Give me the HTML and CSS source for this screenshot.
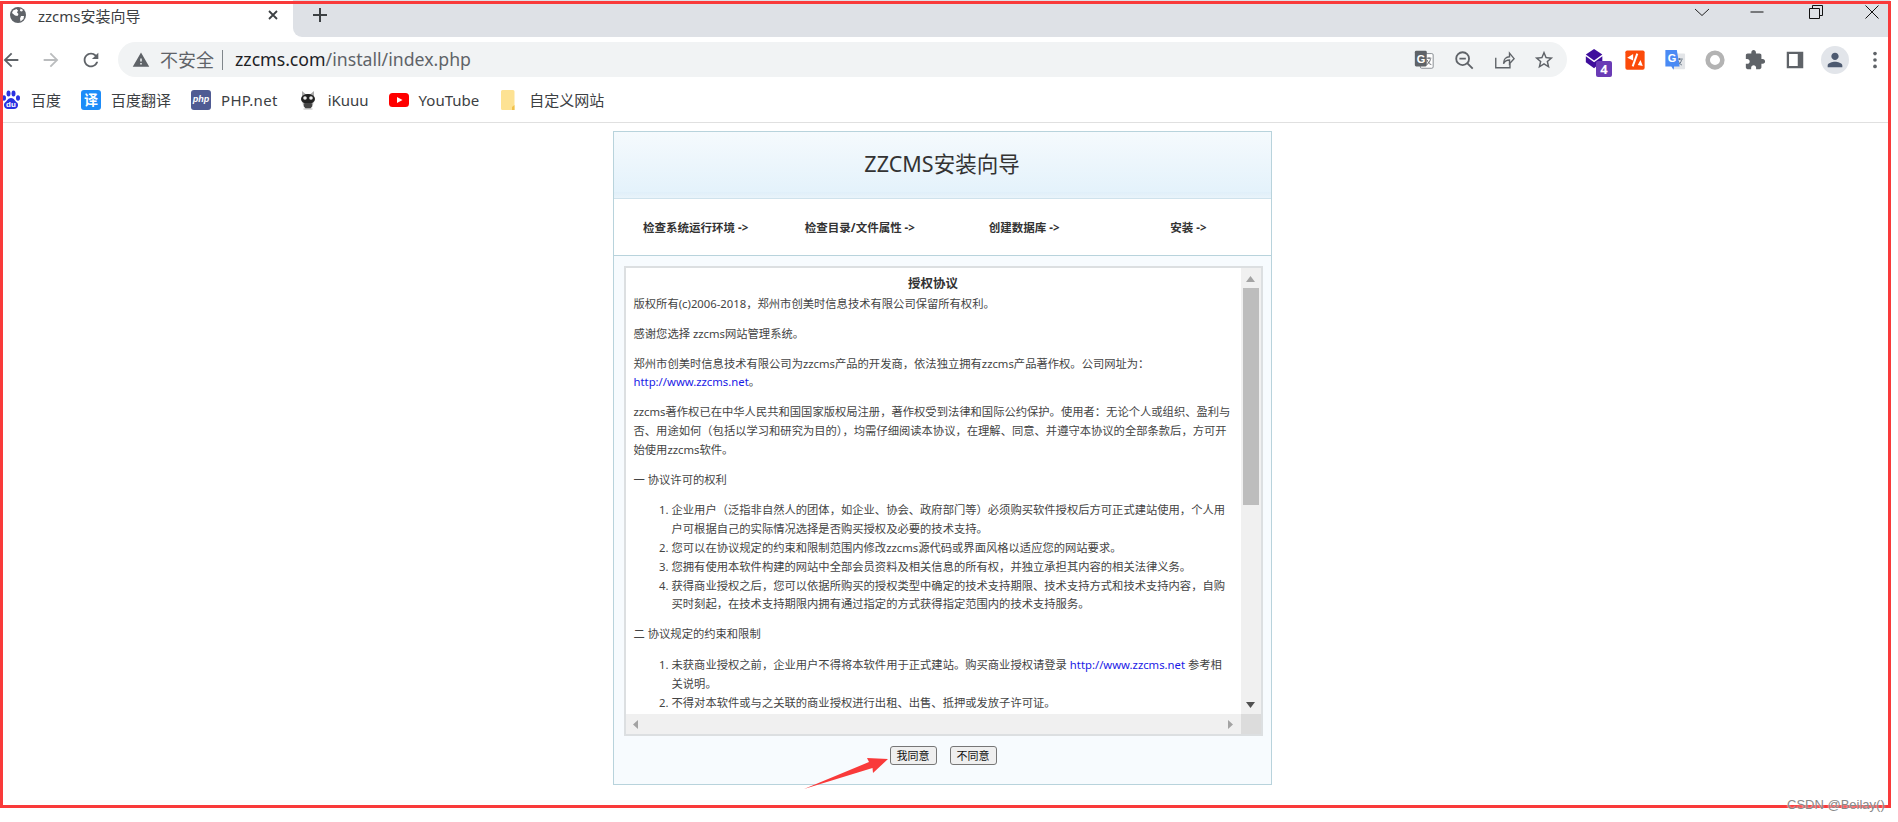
FILE: index.html
```html
<!DOCTYPE html>
<html>
<head>
    <meta charset="UTF-8">
    <title>zzcms安装向导</title>
    <link rel="stylesheet" href="styles.css">
</head>
<body>
    <div class="browser">
        <!-- 标签栏 -->
        <div class="tabstrip">
            <div class="tab">
                <svg class="tab-favicon" viewBox="0 0 16 16"><circle cx="8" cy="8" r="8" fill="#5f6368"/><path d="M3 3.500 6.500 2 8 3.500 7 5.500 8.500 7 7.500 9 5 8.500 2 6zM11 9h3l-.5 3-3 2.500-.5-3zM10.500 1.500 13 3l-1 1.500-2-.5z" fill="#fff"/></svg>
                <span class="tab-title">zzcms安装向导</span>
                <svg class="tab-close" viewBox="0 0 12 12"><path d="M2 2l8 8M10 2l-8 8" stroke="#3c4043" stroke-width="1.800" fill="none"/></svg>
            </div>
            <div class="tab-rest">
                <svg class="tab-plus" viewBox="0 0 16 16"><path d="M8 1v14M1 8h14" stroke="#3c4043" stroke-width="2" fill="none"/></svg>
                <div class="window-controls">
                    <svg class="win-icon" viewBox="0 0 16 16"><path d="M1 5l7 6.500L15 5" stroke="#222" fill="none"/></svg>
                    <svg class="win-icon win-min" viewBox="0 0 16 16"><path d="M1.500 8h13" stroke="#111" stroke-width="1" fill="none"/></svg>
                    <svg class="win-icon win-restore" viewBox="0 0 16 16"><path d="M1.500 4.500h10v10h-10zM4.500 4.500v-3h10v10h-3" stroke="#111" fill="none"/></svg>
                    <svg class="win-icon win-close" viewBox="0 0 16 16"><path d="M1.500 1.500l13 13M14.500 1.500l-13 13" stroke="#111" fill="none"/></svg>
                </div>
            </div>
        </div>

        <!-- 地址栏 -->
        <div class="toolbar">
            <button class="tool-btn"><svg class="icon" viewBox="0 0 24 24"><path fill="#5f6368" d="M20 11H7.830l5.590-5.590L12 4l-8 8 8 8 1.410-1.410L7.830 13H20v-2z"/></svg></button>
            <button class="tool-btn"><svg class="icon" viewBox="0 0 24 24"><path fill="#babcbe" d="M12 4l-1.410 1.410L16.170 11H4v2h12.170l-5.580 5.590L12 20l8-8z"/></svg></button>
            <button class="tool-btn"><svg class="icon" viewBox="0 0 24 24"><path fill="#5f6368" d="M17.650 6.350A7.958 7.958 0 0 0 12 4c-4.420 0-7.990 3.580-7.990 8s3.570 8 7.990 8c3.730 0 6.840-2.550 7.730-6h-2.080A5.990 5.990 0 0 1 12 18c-3.310 0-6-2.690-6-6s2.690-6 6-6c1.660 0 3.140.690 4.220 1.780L13 11h7V4l-2.350 2.350z"/></svg></button>
            <div class="omnibox">
                <svg class="warn-icon" viewBox="0 0 24 24"><path fill="#5f6368" d="M1 21h22L12 2 1 21zm12-3h-2v-2h2v2zm0-4h-2v-4h2v4z"/></svg>
                <span class="not-secure">不安全</span>
                <span class="omni-sep"></span>
                <span class="url"><span class="url-host">zzcms.com</span>/install/index.php</span>
                <div class="omni-actions">
                    <button class="tool-btn">
                        <svg class="icon" viewBox="0 0 24 24"><rect x="8" y="5" width="14" height="16" rx="1.500" fill="#fff" stroke="#80868b"/><rect x="2" y="2" width="13" height="17" rx="1.500" fill="#5f6368"/><text x="4" y="15" class="svg-g">G</text><path d="M15 10h5M17.500 9v2M19 11c-.500 3-2 5-4 6M15.500 12c.800 2.500 2 4.500 4.500 5" stroke="#5f6368" fill="none"/></svg>
                    </button>
                    <button class="tool-btn"><svg class="icon" viewBox="0 0 24 24"><circle cx="10.500" cy="10.500" r="7" fill="none" stroke="#5f6368" stroke-width="2"/><path d="M7 10.500h7M15.500 15.500l6 6" stroke="#5f6368" stroke-width="2" fill="none"/></svg></button>
                    <button class="tool-btn"><svg class="icon" viewBox="0 0 24 24"><path d="M3 9.500v11h15.500v-5M11.500 16c0-5 3-7.500 6.500-7.500V4.500l5 6-5 5.500v-4c-3 0-5 1-6.500 4z" fill="none" stroke="#5f6368" stroke-width="1.500"/></svg></button>
                    <button class="tool-btn"><svg class="icon" viewBox="0 0 24 24"><path fill="#5f6368" d="M22 9.240l-7.190-.620L12 2 9.190 8.630 2 9.240l5.460 4.730L5.820 21 12 17.270 18.180 21l-1.630-7.030L22 9.240zM12 15.400l-3.760 2.270 1-4.280-3.320-2.880 4.380-.380L12 6.100l1.710 4.040 4.380.380-3.320 2.880 1 4.280L12 15.400z"/></svg></button>
                </div>
            </div>
            <div class="ext-icons">
                <button class="tool-btn">
                    <svg class="icon" viewBox="0 0 24 24"><path fill="#3f0e9c" d="M11 0l9 6-9 6.500L2 6z"/><path fill="#3f0e9c" d="M2 8l9 6.500 9-6.500v5l-9 8-9-6.500z"/></svg>
                    <span class="ext-badge">4</span>
                </button>
                <button class="tool-btn"><svg class="icon" viewBox="0 0 24 24"><rect x="1.500" y="1.500" width="21" height="21" rx="2" fill="#fb4a0a"/><path d="M10 5.500v7L3.500 9.500zM15 17.500l5.500 1-2.500-6.500z" fill="#fff"/><path d="M14.500 5L9.500 19" stroke="#fff" stroke-width="2.200" fill="none"/></svg></button>
                <button class="tool-btn">
                    <svg class="icon" viewBox="0 0 24 24"><rect x="9" y="5" width="14" height="17" rx="1" fill="#e3e5e8"/><path d="M14 11h6.500M17 10v2M19 12c-.500 3-2 4.500-4 5.500M15.500 13c.800 2 2 3.500 4 4.500" stroke="#5f6f7f" fill="none"/><path fill="#4a8af4" d="M1.500 1h12.500l3 18H11l-.500 3.500-2.500-3.500H1.500z"/><text x="4" y="14" class="svg-g">G</text></svg>
                </button>
                <button class="tool-btn"><svg class="icon" viewBox="0 0 24 24"><circle cx="12" cy="12" r="8" fill="none" stroke="#b3b3b3" stroke-width="5"/></svg></button>
                <button class="tool-btn"><svg class="icon" viewBox="0 0 24 24"><path fill="#5f6368" d="M20.500 11H19V7c0-1.100-.900-2-2-2h-4V3.500C13 2.120 11.880 1 10.500 1S8 2.120 8 3.500V5H4c-1.100 0-1.990.900-1.990 2v3.800H3.500c1.490 0 2.700 1.210 2.700 2.700s-1.210 2.700-2.700 2.700H2V20c0 1.100.900 2 2 2h3.800v-1.500c0-1.490 1.210-2.700 2.700-2.700 1.490 0 2.700 1.210 2.700 2.700V22H17c1.100 0 2-.900 2-2v-4h1.500c1.380 0 2.500-1.120 2.500-2.500S21.880 11 20.500 11z"/></svg></button>
                <button class="tool-btn"><svg class="icon" viewBox="0 0 24 24"><path fill="#5f6368" fill-rule="evenodd" d="M3 3h18v18H3zM5.500 5.500v13H15v-13z"/></svg></button>
                <button class="tool-btn">
                    <span class="avatar"><svg class="avatar-icon" viewBox="0 0 24 24"><path fill="#4d5a70" d="M12 12c2.210 0 4-1.790 4-4s-1.790-4-4-4-4 1.790-4 4 1.790 4 4 4zm0 2c-2.670 0-8 1.340-8 4v2h16v-2c0-2.660-5.330-4-8-4z"/></svg></span>
                </button>
                <button class="tool-btn"><svg class="icon" viewBox="0 0 24 24"><circle cx="12" cy="5" r="2" fill="#5f6368"/><circle cx="12" cy="12" r="2" fill="#5f6368"/><circle cx="12" cy="19" r="2" fill="#5f6368"/></svg></button>
            </div>
        </div>

        <!-- 书签栏 -->
        <div class="bookmarks">
            <a class="bookmark">
                <svg class="bm-icon" viewBox="0 0 20 20"><g fill="#2932e1"><ellipse cx="3" cy="8" rx="2" ry="2.800"/><ellipse cx="7.500" cy="3.500" rx="2" ry="3"/><ellipse cx="12.500" cy="3.500" rx="2" ry="3"/><ellipse cx="17" cy="8" rx="2" ry="2.800"/><path d="M10 8c3 0 4 3 6 4.500 2 2 1 6.500-3 6.500H7c-4 0-5-4.500-3-6.500C6 11 7 8 10 8z"/></g><text x="10" y="17" class="svg-du">du</text></svg>
                <span>百度</span>
            </a>
            <a class="bookmark">
                <span class="bm-tile bm-tile-yi">译</span>
                <span>百度翻译</span>
            </a>
            <a class="bookmark">
                <span class="bm-tile bm-tile-php">php</span>
                <span class="bm-latin">PHP.net</span>
            </a>
            <a class="bookmark">
                <svg class="bm-icon" viewBox="0 0 20 20"><path fill="#aaa" d="M4 1l3.500 3h5L16 1v8l-1 6H5L4 9z"/><ellipse cx="10" cy="9" rx="7" ry="5" fill="#222"/><circle cx="7" cy="8" r="1.800" fill="#eee"/><circle cx="13" cy="8" r="1.800" fill="#eee"/><path d="M6.500 13h7l1 3-2 2.500h-5l-2-2.500z" fill="#444"/><path d="M5.500 19h9" stroke="#bbb"/></svg>
                <span>iKuuu</span>
            </a>
            <a class="bookmark">
                <svg class="bm-icon" viewBox="0 0 20 20"><rect y="3" width="20" height="14" rx="3.500" fill="#f00"/><path d="M8 7l5.500 3L8 13z" fill="#fff"/></svg>
                <span>YouTube</span>
            </a>
            <a class="bookmark">
                <svg class="bm-icon" viewBox="0 0 20 20"><path d="M3.500 0H14a1.500 1.500 0 0 1 1.500 1.500V20h-12A1.500 1.500 0 0 1 2 18.500V1.500A1.500 1.500 0 0 1 3.500 0z" fill="#fde293"/><path d="M13 20v-3l2.500-2v5z" fill="#f0c14b"/></svg>
                <span>自定义网站</span>
            </a>
        </div>

        <!-- 页面内容 -->
        <div class="page">
            <div class="panel">
                <div class="panel-header">
                    <h1 class="panel-title">ZZCMS安装向导</h1>
                </div>
                <ul class="steps">
                    <li>检查系统运行环境 -&gt;</li>
                    <li>检查目录/文件属性 -&gt;</li>
                    <li>创建数据库 -&gt;</li>
                    <li>安装 -&gt;</li>
                </ul>
                <div class="panel-body">
                    <div class="license">
                        <div class="license-main">
                            <div class="license-view">
                                <h2 class="license-title">授权协议</h2>
                                <p>版权所有(c)2006-2018，郑州市创美时信息技术有限公司保留所有权利。</p>
                                <p>感谢您选择 zzcms网站管理系统。</p>
                                <p>郑州市创美时信息技术有限公司为zzcms产品的开发商，依法独立拥有zzcms产品著作权。公司网址为：<br><a href="#">http://www.zzcms.net</a>。</p>
                                <p>zzcms著作权已在中华人民共和国国家版权局注册，著作权受到法律和国际公约保护。使用者：无论个人或组织、盈利与否、用途如何（包括以学习和研究为目的），均需仔细阅读本协议，在理解、同意、并遵守本协议的全部条款后，方可开始使用zzcms软件。</p>
                                <p>一 协议许可的权利</p>
                                <ol>
                                    <li>企业用户（泛指非自然人的团体，如企业、协会、政府部门等）必须购买软件授权后方可正式建站使用，个人用户可根据自己的实际情况选择是否购买授权及必要的技术支持。</li>
                                    <li>您可以在协议规定的约束和限制范围内修改zzcms源代码或界面风格以适应您的网站要求。</li>
                                    <li>您拥有使用本软件构建的网站中全部会员资料及相关信息的所有权，并独立承担其内容的相关法律义务。</li>
                                    <li>获得商业授权之后，您可以依据所购买的授权类型中确定的技术支持期限、技术支持方式和技术支持内容，自购买时刻起，在技术支持期限内拥有通过指定的方式获得指定范围内的技术支持服务。</li>
                                </ol>
                                <p>二 协议规定的约束和限制</p>
                                <ol>
                                    <li>未获商业授权之前，企业用户不得将本软件用于正式建站。购买商业授权请登录 <a href="#">http://www.zzcms.net</a> 参考相关说明。</li>
                                    <li>不得对本软件或与之关联的商业授权进行出租、出售、抵押或发放子许可证。</li>
                                </ol>
                            </div>
                            <div class="vscroll">
                                <div class="sb-btn"><svg class="sb-arrow" viewBox="0 0 9 9"><path d="M4.500 2L9 8H0z" fill="#a3a3a3"/></svg></div>
                                <div class="sb-track"><div class="sb-thumb"></div></div>
                                <div class="sb-btn"><svg class="sb-arrow" viewBox="0 0 9 9"><path d="M4.500 8L9 2H0z" fill="#505050"/></svg></div>
                            </div>
                        </div>
                        <div class="license-foot">
                            <div class="hscroll">
                                <div class="sb-btn"><svg class="sb-arrow" viewBox="0 0 9 9"><path d="M2 4.500L7 0V9z" fill="#a3a3a3"/></svg></div>
                                <div class="sb-btn"><svg class="sb-arrow" viewBox="0 0 9 9"><path d="M7 4.500L2 0V9z" fill="#a3a3a3"/></svg></div>
                            </div>
                            <div class="sb-corner"></div>
                        </div>
                    </div>
                    <div class="panel-actions">
                        <button class="action-btn">我同意</button>
                        <button class="action-btn">不同意</button>
                    </div>
                </div>
            </div>
        </div>
    </div>

    <!-- 截图上的标注 -->
    <div class="frame"></div>
    <svg class="note-arrow" viewBox="0 0 90 36"><path fill="#f93a3a" d="M0 34L65 7 63 3 84 4 69 18 68.500 13z"/></svg>
    <div class="watermark">CSDN @Beilay()</div>
</body>
</html>
```

FILE: styles.css
```css
* {
    box-sizing: border-box;
}
html, body {
    height: 100%;
}
body {
    margin: 0;
    background: white;
    overflow: hidden;
    font-family: "Noto Sans", "Noto Sans CJK SC", sans-serif;
}
button {
    font-family: inherit;
}
.browser {
    width: 1890px;
    height: 806px;
    overflow: hidden;
}

/* tab strip */
.tabstrip {
    display: flex;
    height: 37px;
    background: white;
}
.tab {
    width: 293px;
    display: flex;
    align-items: center;
    padding: 0 0 7px 10px;
    background: white;
}
.tab-favicon {
    width: 16px;
    height: 16px;
}
.tab-title {
    margin-left: 12px;
    font-size: 15px;
    color: #3c4043;
}
.tab-close {
    width: 12px;
    height: 12px;
    margin-left: auto;
    margin-right: 14px;
}
.tab-rest {
    flex: 1;
    display: flex;
    align-items: flex-start;
    background: #dee1e6;
    border-bottom-left-radius: 9px;
}
.tab-plus {
    width: 16px;
    height: 16px;
    margin: 7px 0 0 19px;
}
.window-controls {
    display: flex;
    margin-left: auto;
    padding: 4px 10px 0 0;
}
.win-icon {
    width: 16px;
    height: 16px;
}
.win-min {
    margin-left: 39px;
}
.win-restore {
    margin-left: 43px;
}
.win-close {
    margin-left: 40px;
}

/* toolbar */
.toolbar {
    display: flex;
    align-items: center;
    width: 1899px;
    height: 45px;
    margin-left: -9px;
    background: white;
}
.tool-btn {
    position: relative;
    flex: none;
    display: flex;
    align-items: center;
    justify-content: center;
    width: 40px;
    height: 35px;
    padding: 0;
    border: none;
    background: none;
}
.icon {
    width: 22px;
    height: 22px;
}
.omnibox {
    flex: none;
    display: flex;
    align-items: center;
    width: 1449px;
    height: 35px;
    margin-left: 7px;
    padding: 0 3px 0 14px;
    border-radius: 18px;
    background: #f1f3f4;
}
.warn-icon {
    width: 18px;
    height: 18px;
}
.not-secure {
    margin: 0 0 2px 10px;
    font-size: 18px;
    color: #5f6368;
}
.omni-sep {
    width: 1px;
    height: 20px;
    margin: 0 12px 0 8px;
    background: #80868b;
}
.url {
    margin-bottom: 2px;
    font-size: 17.700px;
    color: #5f6368;
}
.url-host {
    color: #202124;
}
.omni-actions {
    display: flex;
    margin-left: auto;
}
.ext-icons {
    display: flex;
    margin-left: 8px;
}
.svg-g {
    font: bold 12px "Liberation Sans", sans-serif;
    fill: #fff;
}
.ext-badge {
    position: absolute;
    right: 3px;
    bottom: 0;
    width: 16px;
    height: 16px;
    border-radius: 2px;
    background: #6a3bb5;
    color: white;
    font-size: 13px;
    font-weight: bold;
    line-height: 16px;
    text-align: center;
}
.avatar {
    display: flex;
    align-items: center;
    justify-content: center;
    width: 28px;
    height: 28px;
    border-radius: 50%;
    background: #e2e5ea;
}
.avatar-icon {
    width: 22px;
    height: 22px;
}

/* bookmarks */
.bookmarks {
    display: flex;
    align-items: center;
    gap: 20px;
    height: 41px;
    padding: 0 0 5px 1px;
    border-bottom: 1px solid #e0e0e0;
    background: white;
}
.bookmark {
    display: flex;
    align-items: center;
    gap: 10px;
    font-size: 15px;
    color: #3c4043;
}
.bm-latin {
    letter-spacing: .3px;
}
.bm-icon {
    width: 20px;
    height: 20px;
}
.svg-du {
    font: bold 8px "Liberation Sans", sans-serif;
    fill: #fff;
    text-anchor: middle;
}
.bm-tile {
    width: 20px;
    height: 20px;
    border-radius: 3px;
    color: white;
    text-align: center;
}
.bm-tile-yi {
    background: #1d8cf8;
    font-size: 14px;
    font-weight: bold;
    line-height: 19px;
}
.bm-tile-php {
    background: #4f5b93;
    font: italic bold 9px/19px "Liberation Sans", sans-serif;
}

/* install page */
.page {
    padding: 8px 6px 0 0;
}
.panel {
    width: 659px;
    margin: 0 auto;
    border: 1px solid #b8d3dc;
    background: #f7fbfe;
}
.panel-header {
    height: 67px;
    background: linear-gradient(#f5fafd 0, #e4f2fb 60px, #e0eff9 60px, #eaf4fa 67px);
    border-bottom: 1px solid #cfe2ec;
}
.panel-title {
    margin: 0;
    padding-top: 17px;
    font-size: 21.500px;
    font-weight: normal;
    line-height: 30px;
    color: #333;
    text-align: center;
}
.steps {
    display: grid;
    grid-template-columns: repeat(4, 1fr);
    align-items: center;
    height: 57px;
    margin: 0;
    padding: 0;
    list-style: none;
    border-bottom: 1px solid #b8d3dc;
    background: white;
    font-size: 11.500px;
    font-weight: bold;
    color: #333;
    text-align: center;
}
.panel-body {
    padding: 10px 8px 19px 10px;
}
.license {
    display: flex;
    flex-direction: column;
    height: 470px;
    border: 2px solid #dcdfe1;
    background: white;
    font-size: 11.300px;
    line-height: 18.800px;
    color: #444;
}
.license-main {
    flex: 1;
    display: flex;
    min-height: 0;
}
.license-view {
    flex: 1;
    min-width: 0;
    padding: 6px 8px 0;
    overflow: hidden;
}
.license-title {
    margin: 0 0 2px;
    font-size: 12.500px;
    font-weight: bold;
    line-height: 19px;
    color: #333;
    text-align: center;
}
.license p {
    margin: 0 0 11px;
}
.license ol {
    margin: 12px 0 11px;
    padding-left: 38px;
}
.license a {
    color: #1a1ae6;
    text-decoration: none;
}

/* scrollbars of the agreement box */
.vscroll {
    flex: none;
    display: flex;
    flex-direction: column;
    width: 20px;
    background: #f0f0f0;
}
.sb-btn {
    flex: none;
    display: flex;
    align-items: center;
    justify-content: center;
    width: 20px;
    height: 20px;
}
.sb-arrow {
    width: 9px;
    height: 9px;
}
.sb-track {
    flex: 1;
    padding: 0 2px;
}
.sb-thumb {
    height: 217px;
    background: #bdbdbd;
}
.license-foot {
    flex: none;
    display: flex;
    height: 20px;
}
.hscroll {
    flex: 1;
    display: flex;
    justify-content: space-between;
    background: #f0f0f0;
}
.sb-corner {
    width: 20px;
    background: #dcdcdc;
}

.panel-actions {
    display: flex;
    justify-content: center;
    gap: 13px;
    margin-top: 10px;
}
.action-btn {
    width: 47px;
    height: 19px;
    padding: 0;
    border: 1px solid #767676;
    border-radius: 3px;
    background: #efefef;
    font-size: 11px;
    line-height: 15px;
    color: #111;
}

/* annotations on top of the screenshot */
.frame {
    position: absolute;
    left: 0;
    top: 1px;
    width: 1891px;
    height: 807px;
    border: 3px solid #f93a3a;
    pointer-events: none;
}
.note-arrow {
    position: absolute;
    left: 804px;
    top: 755px;
    width: 90px;
    height: 36px;
}
.watermark {
    position: absolute;
    left: 1787px;
    top: 797px;
    font: 13px "Liberation Sans", sans-serif;
    color: #888;
    text-shadow: 0 0 2px #fff;
    white-space: nowrap;
}
```
